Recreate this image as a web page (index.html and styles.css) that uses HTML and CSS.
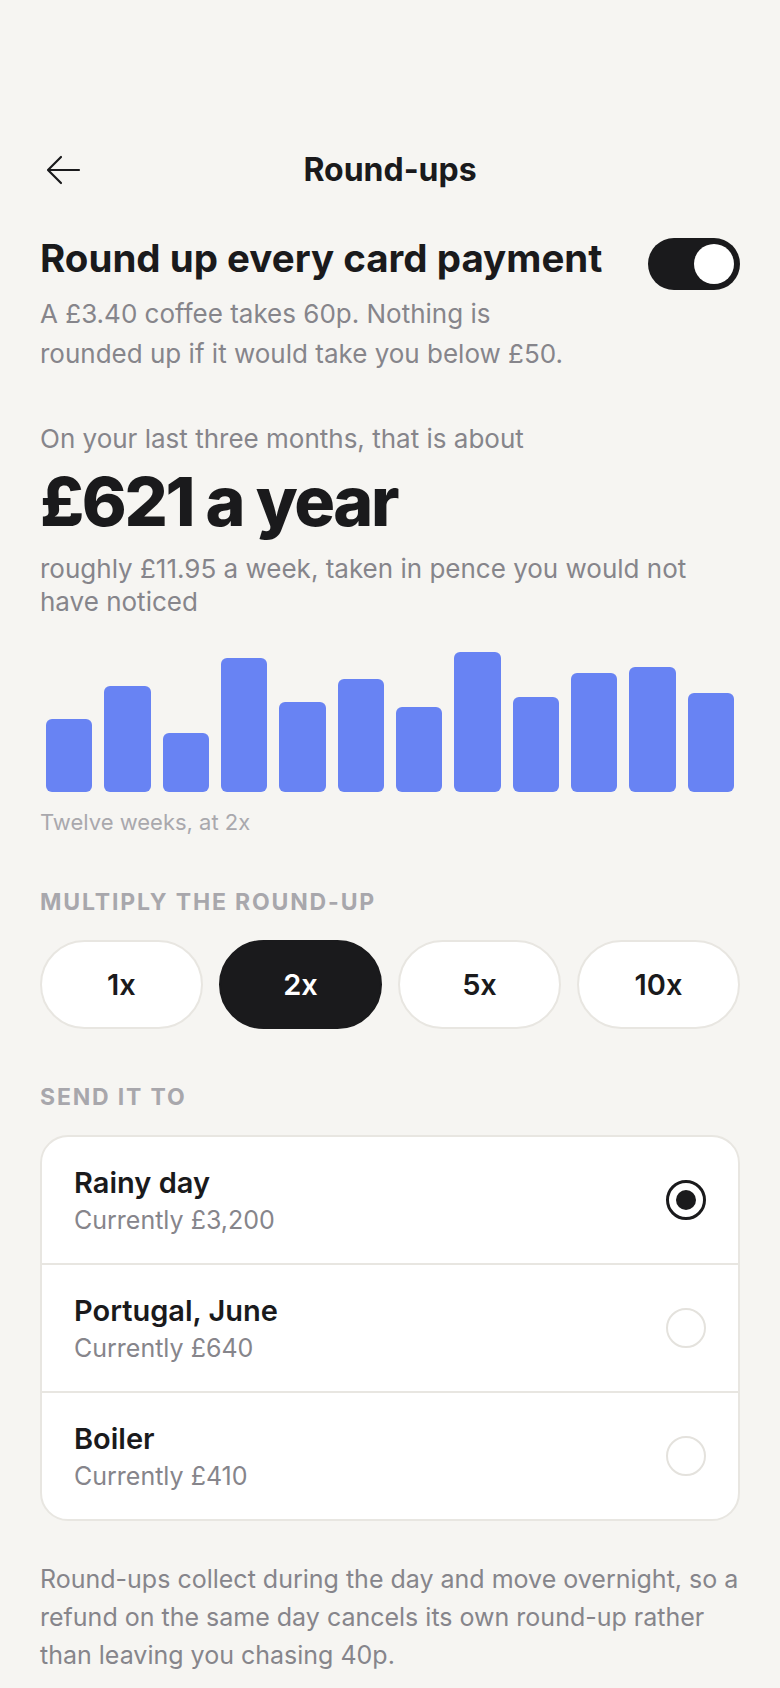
FILE: index.html
```html
<!DOCTYPE html>
<html lang="en">
<head>
<meta charset="utf-8">
<title>Round-ups</title>
<link rel="stylesheet" href="styles.css">
</head>
<body>
<main class="page">
  <header class="header">
    <button class="back" aria-label="Back">
      <svg width="40" height="40" viewBox="0 0 40 40" fill="none" stroke="#1a1a1c" stroke-width="2.2" stroke-linecap="round" stroke-linejoin="round"><path d="M35 20H5M17 7L4 20l13 13"/></svg>
    </button>
    <h1 class="title">Round-ups</h1>
    <span></span>
  </header>

  <section class="toprow">
    <div class="topcol">
      <h2 class="heading">Round up every card payment</h2>
      <p class="sub">A £3.40 coffee takes 60p. Nothing is rounded up if it would take you below £50.</p>
    </div>
    <div class="toggle" role="switch" aria-checked="true"><span class="knob"></span></div>
  </section>

  <p class="lead">On your last three months, that is about</p>
  <p class="big">£621 a year</p>
  <p class="roughly">roughly £11.95 a week, taken in pence you would not have noticed</p>

  <div class="chart">
    <span class="bar" style="height:52%"></span>
    <span class="bar" style="height:76%"></span>
    <span class="bar" style="height:42%"></span>
    <span class="bar" style="height:96%"></span>
    <span class="bar" style="height:64%"></span>
    <span class="bar" style="height:81%"></span>
    <span class="bar" style="height:61%"></span>
    <span class="bar" style="height:100%"></span>
    <span class="bar" style="height:68%"></span>
    <span class="bar" style="height:85%"></span>
    <span class="bar" style="height:89%"></span>
    <span class="bar" style="height:71%"></span>
  </div>
  <p class="caption">Twelve weeks, at 2x</p>

  <h3 class="label label-mult">MULTIPLY THE ROUND-UP</h3>
  <div class="mults">
    <button class="mult">1x</button>
    <button class="mult is-on">2x</button>
    <button class="mult">5x</button>
    <button class="mult">10x</button>
  </div>

  <h3 class="label label-send">SEND IT TO</h3>
  <ul class="pots">
    <li class="pot">
      <div class="pot-text"><span class="pot-name">Rainy day</span><span class="pot-sub">Currently £3,200</span></div>
      <span class="radio is-on"></span>
    </li>
    <li class="pot">
      <div class="pot-text"><span class="pot-name">Portugal, June</span><span class="pot-sub">Currently £640</span></div>
      <span class="radio"></span>
    </li>
    <li class="pot">
      <div class="pot-text"><span class="pot-name">Boiler</span><span class="pot-sub">Currently £410</span></div>
      <span class="radio"></span>
    </li>
  </ul>

  <p class="footer">Round-ups collect during the day and move overnight, so a refund on the same day cancels its own round-up rather than leaving you chasing 40p.</p>
</main>
</body>
</html>
```

FILE: styles.css
```css
* { box-sizing: border-box; }
html, body { margin: 0; padding: 0; }
body {
  background: #f6f5f2;
  color: #1a1a1c;
  font-family: Inter, "Noto Sans", sans-serif;
  -webkit-font-smoothing: antialiased;
}
p, h1, h2, h3, ul { margin: 0; padding: 0; }
button { font-family: inherit; }

.page {
  width: 780px;
  padding: 142px 40px 0;
}

.header {
  height: 56px;
  display: grid;
  grid-template-columns: 56px 1fr 56px;
  align-items: center;
}
.back {
  width: 40px; height: 40px;
  margin-left: 4px;
  padding: 0; border: 0; background: none;
  display: flex;
}
.title {
  text-align: center;
  font-size: 32px;
  font-weight: 700;
  line-height: 40px;
}

.toprow {
  display: flex;
  align-items: flex-start;
  gap: 48px;
  margin-top: 37px;
}
.topcol { flex: 1; min-width: 0; }
.heading {
  font-size: 38.5px;
  font-weight: 700;
  line-height: 46px;
  white-space: nowrap;
}
.sub {
  margin-top: 13px;
  font-size: 26px;
  line-height: 40px;
  color: #86858b;
}
.toggle {
  flex: none;
  width: 92px; height: 52px;
  margin-top: 3px;
  border-radius: 26px;
  background: #1a1a1c;
  display: flex;
  align-items: center;
  justify-content: flex-end;
  padding: 0 6px;
}
.knob {
  width: 40px; height: 40px;
  border-radius: 50%;
  background: #fff;
}

.lead {
  margin-top: 47px;
  font-size: 26px;
  line-height: 36px;
  color: #86858b;
}
.big {
  margin-top: 7px;
  font-size: 68px;
  font-weight: 800;
  line-height: 75px;
  letter-spacing: -0.035em;
}
.roughly {
  margin-top: 13px;
  font-size: 26px;
  line-height: 33px;
  color: #86858b;
}

.chart {
  margin-top: 34px;
  height: 140px;
  padding: 0 6px;
  display: flex;
  align-items: flex-end;
  gap: 12px;
}
.bar {
  flex: 1;
  background: #6883f3;
  border-radius: 6px;
}
.caption {
  margin-top: 15px;
  font-size: 22px;
  line-height: 30px;
  color: #a9a8ad;
}

.label {
  font-size: 23px;
  font-weight: 700;
  line-height: 30px;
  letter-spacing: 0.08em;
  color: #a8a7ac;
}
.label-mult { margin-top: 50px; }
.label-send { margin-top: 53px; }

.mults {
  margin-top: 23px;
  display: grid;
  grid-template-columns: repeat(4, 1fr);
  gap: 16px;
}
.mult {
  height: 89px;
  border: 2px solid #e8e6e1;
  border-radius: 45px;
  background: #fff;
  color: #1a1a1c;
  font-size: 29px;
  font-weight: 600;
}
.mult.is-on {
  background: #1a1a1c;
  border-color: #1a1a1c;
  color: #fff;
}

.pots {
  margin-top: 23px;
  list-style: none;
  background: #fff;
  border: 2px solid #e8e6e1;
  border-radius: 28px;
  overflow: hidden;
}
.pot {
  height: 126px;
  padding: 0 32px;
  display: flex;
  align-items: center;
  justify-content: space-between;
}
.pot + .pot { border-top: 2px solid #e8e6e1; height: 128px; }
.pot-text { display: flex; flex-direction: column; }
.pot-name {
  font-size: 29px;
  font-weight: 600;
  line-height: 36px;
}
.pot-sub {
  margin-top: 3px;
  font-size: 25px;
  line-height: 32px;
  color: #86858b;
}
.radio {
  width: 40px; height: 40px;
  border-radius: 50%;
  border: 2px solid #e4e2dd;
}
.radio.is-on {
  border: 3px solid #1a1a1c;
  display: flex;
  align-items: center;
  justify-content: center;
}
.radio.is-on::after {
  content: "";
  width: 20px; height: 20px;
  border-radius: 50%;
  background: #1a1a1c;
}

.footer {
  margin-top: 39px;
  font-size: 25px;
  line-height: 38px;
  color: #86858b;
}
```
